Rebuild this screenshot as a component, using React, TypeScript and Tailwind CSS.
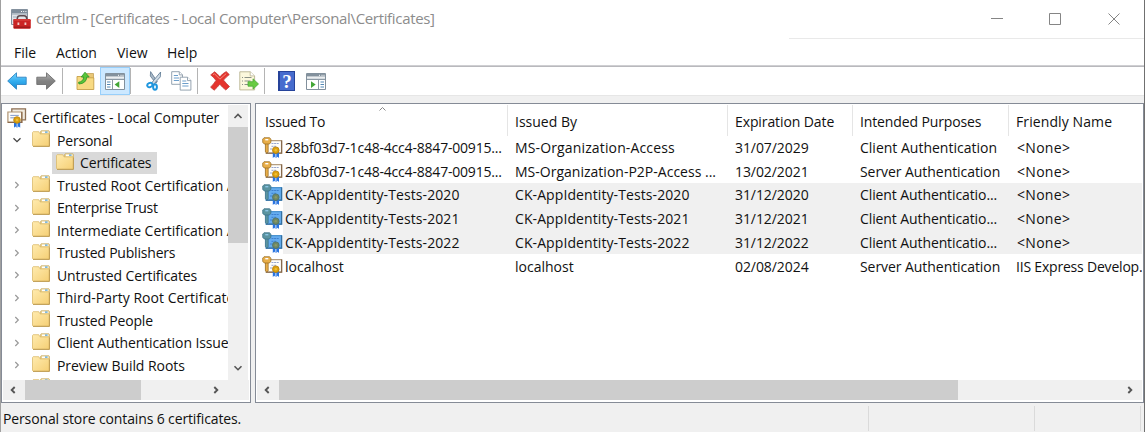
import React from "react";

function Chevron({ dir, className = "" }: { dir: "up" | "down" | "left" | "right"; className?: string }) {
  const d = {
    up: "M1.5 7 5 3.5 8.5 7",
    down: "M1.5 3.2 5 6.7 8.5 3.2",
    left: "M6.7 2 3.7 5 6.7 8",
    right: "M3.3 2 6.3 5 3.3 8",
  }[dir];
  return (
    <svg viewBox="0 0 10 10" className={`size-[10px] shrink-0 ${className}`} fill="none" stroke="currentColor">
      <path d={d} />
    </svg>
  );
}

function AppIcon() {
  return (
    <svg viewBox="0 0 20 20" className="size-5 shrink-0">
      <path d="M.5.5h16v15H.5z" fill="#dfe4e9" stroke="#84919e" />
      <path d="M1 1h15v3.5H1z" fill="#7e8d9b" />
      <path d="M10 2.5h1M12.2 2.5h1M14.4 2.5h1" stroke="#fff" />
      <path d="M1 5.5h15" stroke="#b9c3cc" />
      <path d="M2 8h3.5M2 10.5h3.5M2 13h1" stroke="#9fadba" />
      <path d="M6.3 10.5V9.3q.2-2.5 2.7-2.5h4q2.5 0 2.7 2.5v1.2" fill="none" stroke="#5d4a50" strokeWidth="1.6" />
      <rect x="2.3" y="10" width="17.5" height="9.8" rx="1.2" fill="#cb2424" />
      <path d="M3 18.3h16" stroke="#a01a1c" strokeWidth="1.6" />
      <path d="M3.2 11h15.6" stroke="#dc4a44" />
      <path d="M6.5 13.4h1.8v2.6H6.5zM13.5 13.4h1.8v2.6h-1.8z" fill="#f0cfcc" />
    </svg>
  );
}

function Folder({ className = "" }: { className?: string }) {
  return (
    <svg viewBox="0 0 18 18" className={`relative -top-px size-[18px] shrink-0 ${className}`}>
      <defs>
        <linearGradient id="folder" x1="0" y1="0" x2="1" y2="1">
          <stop stopColor="#ffebaf" />
          <stop offset="1" stopColor="#f5cf74" />
        </linearGradient>
      </defs>
      <path d="M8.5 1.4 9.2.7h7.7l.6.7V6h-9z" fill="#ead18c" stroke="#c9ad6a" strokeWidth=".7" />
      <path d="M10 1.5h6.4v1.8H10z" fill="#fff" />
      <path d="M13 1.5h2.6v1.2H13z" fill="#4a9cd0" />
      <path d="M.5 2.5 1.2 1.7h5.6l1.2 2.2h9.4v12.3H1.2L.5 15.5z" fill="url(#folder)" stroke="#dbba6b" strokeWidth=".8" />
      <path d="M1 16.4h16.4V4.5" fill="none" stroke="#b9964d" strokeWidth=".9" />
    </svg>
  );
}

function Ribbon({ x, y, selected }: { x: number; y: number; selected?: boolean }) {
  return (
    <g transform={`translate(${x} ${y})`}>
      <path d="M-3 1.5v6.3l1.4-1.2 1.3 1.2V1.5zM.5 1.5v6.3l1.3-1.2 1.4 1.2V1.5z" fill="#2974e0" />
      <circle r="3.3" fill={selected ? "#6d8766" : "#dda20e"} stroke={selected ? "#4f7163" : "#b67d09"} strokeWidth=".8" />
      <circle r="1.2" fill={selected ? "#8b9a62" : "#efbf38"} />
    </g>
  );
}

function StoreIcon() {
  return (
    <svg viewBox="0 0 20 20" className="size-5 shrink-0">
      <path d="M4.8.8h13.7v11H4.8z" fill="#f1ebdf" stroke="#8d7054" strokeWidth="1.3" />
      <path d="M.9 4h13.9v10.3H.9z" fill="#fdfcf8" stroke="#b09472" strokeWidth="1.2" />
      <path d="M14.8 4v10.3H.9" fill="none" stroke="#8a6849" strokeWidth="1.2" />
      <path d="M3.3 7.4h8.5M3.3 9.8h4.5" stroke="#758fc4" strokeWidth=".9" />
      <Ribbon x={10} y={12} />
    </svg>
  );
}

function CertIcon({ selected }: { selected?: boolean }) {
  return (
    <svg viewBox="0 0 21 21" className="size-[21px] shrink-0">
      <path d="M4 3.6h15.6v12.6H4z" fill={selected ? "#65acef" : "#fffefb"} stroke={selected ? "#4b93cf" : "#b59e80"} strokeWidth="1.1" />
      <path d="M19.6 3.4v12.8H4" fill="none" stroke={selected ? "#346f9f" : "#86694b"} strokeWidth="1.3" />
      <path d="M9.5 6.5h7.5M9.5 9.3h5M8 12h3" stroke={selected ? "#3a7cc9" : "#8b9dca"} strokeWidth=".9" strokeDasharray="2 .6" />
      <g stroke={selected ? "#386f87" : "#94691f"} strokeWidth=".7" fill={selected ? "#5b94a0" : "#e8ae49"}>
        <path d="M3.4 6.5h2.8v8.3L4.9 16l-1.5-1.2z" />
        <path d="M2 .7h5.6l1.3 1.5v3L7.5 7H2.2L.7 5.2v-3z" />
      </g>
      <path d="M3.3 2h3v1.4h-3z" fill={selected ? "#8dc6e8" : "#fff"} />
      <Ribbon x={13.8} y={13.2} selected={selected} />
    </svg>
  );
}

function Arrow({ back }: { back?: boolean }) {
  return (
    <svg viewBox="0 0 20 18" className="h-[18px] w-5 shrink-0">
      <defs>
        <linearGradient id={back ? "back" : "fwd"} x1="0" y1="0" x2="0" y2="1">
          <stop stopColor={back ? "#74d5ff" : "#b5b5b5"} />
          <stop offset=".5" stopColor={back ? "#35aeef" : "#828282"} />
          <stop offset="1" stopColor={back ? "#168ad2" : "#777"} />
        </linearGradient>
      </defs>
      {back ? (
        <path d="M.7 9 9.5.8v4.4h9.7v7.3H9.5v4.7z" fill="url(#back)" stroke="#2f86c4" strokeWidth=".9" />
      ) : (
        <path d="M19.3 9 10.5.8v4.4H.8v7.3h9.7v4.7z" fill="url(#fwd)" stroke="#707070" strokeWidth=".9" />
      )}
    </svg>
  );
}

function UpFolder() {
  return (
    <svg viewBox="0 0 19 20" className="h-5 w-[19px] shrink-0">
      <path d="M10 3.2 11 2.5h6.5v5H10z" fill="#e9c777" stroke="#bd9a4d" strokeWidth=".7" />
      <path d="M1 5.5h5l1 1.3h10.8v11.7H1z" fill="#f8da82" stroke="#c7a049" strokeWidth=".9" />
      <path d="M2.5 11.3Q7.5 10.5 7.7 6H5.2L9 1.2 13.2 6h-2.4Q10.3 12.5 3 13z" fill="#5ac538" stroke="#2c9629" strokeWidth=".8" />
    </svg>
  );
}

function PaneIcon({ flipped }: { flipped?: boolean }) {
  return (
    <svg viewBox="0 0 20 17" className="h-[17px] w-5 shrink-0">
      <path d="M.5.5h19v16H.5z" fill="#fff" stroke="#82909c" />
      <path d="M1 1h18v2.5H1z" fill="#83919d" />
      <path d="M13 2.3h1M15.5 2.3h1M17.5 2.3h1" stroke="#fff" />
      <path d="M1 4.5h18v2H1z" fill="#d6dce1" />
      <path d="M1 6.5h18" stroke="#8c99a4" />
      {flipped ? (
        <>
          <path d="M12.5 6v10" stroke="#8c99a4" />
          <path d="M14.5 9H18M14.5 11.5H18M14.5 14H18" stroke="#5288b5" />
          <path d="M5 8.2 9.7 11.6 5 15z" fill="#44a636" />
        </>
      ) : (
        <>
          <path d="M7.5 6v10" stroke="#8c99a4" />
          <path d="M2 9h3.5M2 11.5h3.5M2 14h3.5" stroke="#5288b5" />
          <path d="M14.3 8.2 9.6 11.6l4.7 3.4z" fill="#44a636" />
        </>
      )}
    </svg>
  );
}

function Scissors() {
  return (
    <svg viewBox="0 0 16 20" className="h-5 w-4 shrink-0" fill="none">
      <path d="M4.6.6 4.3 5l5.4 7.2 1.6-1.4z" fill="#a9b8c6" stroke="#5f7a92" strokeWidth=".8" />
      <path d="M14.6 1 7.5 9.5l-2.3 3.2 1.9 1.2 7.2-8z" fill="#cfdbe5" stroke="#56748e" strokeWidth=".8" />
      <ellipse cx="3.9" cy="14" rx="2.7" ry="2" stroke="#1f96de" strokeWidth="2" transform="rotate(-25 3.9 14)" />
      <ellipse cx="9" cy="16" rx="1.9" ry="2.7" stroke="#1f96de" strokeWidth="2" />
    </svg>
  );
}

function Copy() {
  return (
    <svg viewBox="0 0 21 20" className="h-5 w-[21px] shrink-0">
      <g stroke="#8b9ba9" fill="#fff" strokeWidth=".9">
        <path d="M.7.7h7.6l3.2 3.2v9.4H.7z" />
        <path d="M8.3.7v3.2h3.2" />
        <path d="M9.2 6.2h7.3l3.4 3.4v9.5H9.2z" />
        <path d="M16.5 6.2v3.4h3.4" />
      </g>
      <path d="M2.8 4.5H7M2.8 7H8M2.8 9.5H8M11.3 10h4M11.3 12.5h6.2M11.3 15h6.2" stroke="#6c9ecb" />
    </svg>
  );
}

function Delete() {
  return (
    <svg viewBox="0 0 20 20" className="size-5 shrink-0">
      <path d="M.7 3.9 4.6.8q2.8 2 5.3 5Q12.8 2.3 16.2.6L19.3 3.6q-3.2 2.4-5.8 5.5 2.7 3.3 6 6.5l-3.7 3.4q-3.4-2.6-6-5.8-2.7 3.4-5.6 6L.6 16.2q3-3.1 5.4-6.8Q3.8 6.4.7 3.9z" fill="#e5342d" stroke="#c2403c" strokeWidth=".8" />
      <path d="m3 3.7 1.4-1 5.5 5.5L16.2 2.6" fill="none" stroke="#f48c7e" />
    </svg>
  );
}

function Export() {
  return (
    <svg viewBox="0 0 20 20" className="size-5 shrink-0">
      <path d="M.8.8h10.4l4.4 4.1v14H.8z" fill="#fcf8dd" stroke="#b9b391" strokeWidth=".9" />
      <path d="M11.2.8v4.1h4.4" fill="#fff" stroke="#b9b391" strokeWidth=".8" />
      <path d="M3 6.5h1M3 10h1M3 13.5h1M5.5 6.5h7M5.5 10h6M5.5 13.5h5" stroke="#8b9187" />
      <path d="M9 10.7h5V7.8l5.5 5.2-5.5 5.2v-3H9z" fill="#68cb42" stroke="#4aa93b" strokeWidth=".8" />
    </svg>
  );
}

function HelpIcon() {
  return (
    <div className="flex h-5 w-[17px] items-center justify-center border border-l-2 border-[#26439a] bg-[#466cce] font-['Liberation_Serif',serif] text-[19px] leading-none font-bold text-white">
      ?
    </div>
  );
}

const Divider = () => <div className="h-[26px] w-px shrink-0 bg-[#b4b4b4]" />;

const stores = [
  { name: "Trusted Root Certification Authorities", track: "tracking-[-0.03px]" },
  { name: "Enterprise Trust", track: "tracking-[-0.24px]" },
  { name: "Intermediate Certification Authorities", track: "tracking-[-0.05px]" },
  { name: "Trusted Publishers", track: "tracking-[-0.2px]" },
  { name: "Untrusted Certificates", track: "tracking-[-0.13px]" },
  { name: "Third-Party Root Certificate Authorities", track: "tracking-[0.02px]" },
  { name: "Trusted People", track: "tracking-[-0.18px]" },
  { name: "Client Authentication Issuers", track: "tracking-[-0.1px]" },
  { name: "Preview Build Roots", track: "tracking-[-0.06px]" },
  { name: "", track: "" },
];

const rows = [
  ["28bf03d7-1c48-4cc4-8847-00915...", "MS-Organization-Access", "31/07/2029", "Client Authentication", "<None>"],
  ["28bf03d7-1c48-4cc4-8847-00915...", "MS-Organization-P2P-Access ...", "13/02/2021", "Server Authentication", "<None>"],
  ["CK-AppIdentity-Tests-2020", "CK-AppIdentity-Tests-2020", "31/12/2020", "Client Authenticatio...", "<None>"],
  ["CK-AppIdentity-Tests-2021", "CK-AppIdentity-Tests-2021", "31/12/2021", "Client Authenticatio...", "<None>"],
  ["CK-AppIdentity-Tests-2022", "CK-AppIdentity-Tests-2022", "31/12/2022", "Client Authenticatio...", "<None>"],
  ["localhost", "localhost", "02/08/2024", "Server Authentication", "IIS Express Develop..."],
];

function tracking(text: string) {
  if (text.startsWith("CK-")) return "tracking-[0.09px]";
  if (text === "MS-Organization-Access") return "tracking-[0.14px]";
  if (text.startsWith("MS-")) return "tracking-[0.01px]";
  if (text === "localhost") return "tracking-[0px]";
  if (text === "<None>") return "tracking-[0.3px] pl-px";
  if (text === "Client Authentication") return "tracking-[0px]";
  if (text === "Server Authentication") return "tracking-[-0.06px]";
  if (text.startsWith("Client")) return "tracking-[-0.1px]";
  if (text.includes("/")) return "tracking-[-0.07px]";
  return "";
}

export default function App() {
  return (
    <div className="flex h-[432px] w-[1145px] flex-col overflow-hidden border-x border-l-[#a0a0a0] border-r-[#707070] bg-white font-['Open_Sans','Noto_Sans',sans-serif] text-[14px] tracking-[-0.2px] whitespace-pre text-[#111]">
      <header className="flex h-[38px] shrink-0 items-center pl-[10px]">
        <AppIcon />
        <span className="ml-[5px] pb-[2px] text-[15px] tracking-[-0.335px] text-[#8c8c8c]">certlm - [Certificates - Local Computer\Personal\Certificates]</span>
        <svg viewBox="0 0 140 14" className="mr-5 ml-auto h-[14px] w-[140px]" fill="none" stroke="#858585">
          <path d="M7 6.5h12M65.5 1.5h11v11h-11zM124.5 1.5l11 11M135.5 1.5l-11 11" />
        </svg>
      </header>
      <div className="ml-[788px] h-px shrink-0 bg-[#e9e9e9]" />
      <nav className="flex h-[26px] shrink-0 items-center pl-[13px]">
        <span className="w-[42px] tracking-[0px]">File</span>
        <span className="w-[61px] tracking-[-0.05px]">Action</span>
        <span className="w-[50px] tracking-[0px]">View</span>
        <span className="tracking-[0px]">Help</span>
      </nav>
      <div className="h-[2px] shrink-0 border-t border-[#cfcfd2] bg-[#b9b9bd]" />
      <div className="flex h-7 shrink-0 items-center pl-[6px]">
        <Arrow back />
        <div className="w-[9px]" />
        <Arrow />
        <div className="w-[6px]" />
        <Divider />
        <div className="w-[13px]" />
        <UpFolder />
        <div className="w-[5px]" />
        <div className="flex h-[28px] w-[30px] items-center justify-center border border-[#98cffa] bg-[#cce8ff]">
          <PaneIcon />
        </div>
        <Divider />
        <div className="w-[15px]" />
        <Scissors />
        <div className="w-[9px]" />
        <Copy />
        <div className="w-[5px]" />
        <Divider />
        <div className="w-[12px]" />
        <Delete />
        <div className="w-[9px]" />
        <Export />
        <div className="w-[5px]" />
        <Divider />
        <div className="w-[13px]" />
        <HelpIcon />
        <div className="w-[11px]" />
        <PaneIcon flipped />
      </div>
      <main className="flex h-[308px] shrink-0 gap-[4px] border-t border-[#e6e6e6] bg-[#f0f0f0] pt-[7px]">
        <section className="flex w-[250px] flex-col border border-[#858b96] bg-white pt-[1px] pr-[1px] pb-[2px] pl-[1px]">
          <div className="flex h-[275px]">
            <div className="h-[275px] w-[225px] overflow-hidden pt-[1.5px]">
              <div className="flex h-[22.5px] items-center pl-[4px]">
                <StoreIcon />
                <span className="ml-[6px] tracking-[-0.07px]">Certificates - Local Computer</span>
              </div>
              <div className="flex h-[22.5px] items-center pl-[9px]">
                <Chevron dir="down" className="stroke-[1.3] text-[#444]" />
                <Folder className="ml-[10px]" />
                <span className="ml-[7px]">Personal</span>
              </div>
              <div className="flex h-[22.5px] items-center pl-[49px]">
                <div className="flex h-full w-[105px] items-center bg-[#d9d9d9] pl-[4px]">
                  <Folder />
                  <span className="ml-[6px] tracking-[-0.15px]">Certificates</span>
                </div>
              </div>
              {stores.map((s, i) => (
                <div key={i} className="flex h-[22.5px] items-center pl-[9px]">
                  <Chevron dir="right" className="stroke-[1.2] text-[#999]" />
                  <Folder className="ml-[10px]" />
                  <span className={`ml-[7px] ${s.track}`}>{s.name}</span>
                </div>
              ))}
            </div>
            <div className="flex w-5 flex-col items-center bg-[#f0f0f0]">
              <div className="flex h-[22px] shrink-0 items-center">
                <Chevron dir="up" className="stroke-[1.6] text-[#555]" />
              </div>
              <div className="h-[116px] w-full bg-[#cdcdcd]" />
              <Chevron dir="down" className="mt-auto mb-[7px] stroke-[1.6] text-[#555]" />
            </div>
          </div>
          <div className="flex h-5 shrink-0 items-center bg-[#f0f0f0] pl-[5px]">
            <Chevron dir="left" className="stroke-[1.9] text-[#555]" />
            <div className="ml-[7px] h-full w-[116px] bg-[#cdcdcd]" />
            <Chevron dir="right" className="ml-[70px] stroke-[1.9] text-[#555]" />
          </div>
        </section>
        <section className="flex w-[889px] flex-col border border-[#858b96] bg-white px-[1px] pt-[1px] pb-[2px]">
          <div className="relative flex h-[30.5px] shrink-0 items-center overflow-hidden pt-[2px] pl-2">
            <span className="w-[250px]">Issued To</span>
            <span className="w-[220px] tracking-[0px]">Issued By</span>
            <span className="w-[125px] tracking-[-0.1px]">Expiration Date</span>
            <span className="w-[156px] tracking-[-0.13px]">Intended Purposes</span>
            <span className="tracking-[0.1px]">Friendly Name</span>
            <svg viewBox="0 0 885 31" className="absolute top-0 left-0 h-[31px] w-[885px]" fill="none" stroke="#e5e5e5">
              <path d="M250.5 0v31M470.5 0v31M595.5 0v31M751.5 0v31" />
              <path d="m122.5 5.5 3-3 3 3" stroke="#888" />
            </svg>
          </div>
          <div className="h-[244.5px] shrink-0 overflow-hidden">
            {rows.map((r, i) => {
              const selected = i > 1 && i < 5;
              return (
                <div key={i} className="flex h-[23.8px] items-center pl-[5px]">
                  <CertIcon selected={selected} />
                  <div className={`flex h-full flex-1 items-center overflow-hidden pl-[2px] ${selected ? "bg-[#f0f0f0]" : ""}`}>
                    <span className={`w-[230px] shrink-0 ${tracking(r[0])}`}>{r[0]}</span>
                    <span className={`w-[220px] shrink-0 ${tracking(r[1])}`}>{r[1]}</span>
                    <span className={`w-[125px] shrink-0 ${tracking(r[2])}`}>{r[2]}</span>
                    <span className={`w-[156px] shrink-0 ${tracking(r[3])}`}>{r[3]}</span>
                    <span className={tracking(r[4])}>{r[4]}</span>
                  </div>
                </div>
              );
            })}
          </div>
          <div className="flex h-5 shrink-0 items-center bg-[#f0f0f0] pl-[5px]">
            <Chevron dir="left" className="stroke-[1.9] text-[#555]" />
            <div className="ml-[7px] h-full w-[679px] bg-[#cdcdcd]" />
            <Chevron dir="right" className="mr-[7px] ml-auto stroke-[1.9] text-[#555]" />
          </div>
        </section>
      </main>
      <footer className="flex flex-1 items-stretch bg-[#f0f0f0] pt-[3px] pb-[1px]">
        <span className="flex w-[867px] items-center pl-[2px] tracking-[-0.13px]">Personal store contains 6 certificates.</span>
        <div className="w-[166px] border-l border-[#dadada]" />
        <div className="w-[107px] border-x border-[#dadada]" />
      </footer>
    </div>
  );
}
